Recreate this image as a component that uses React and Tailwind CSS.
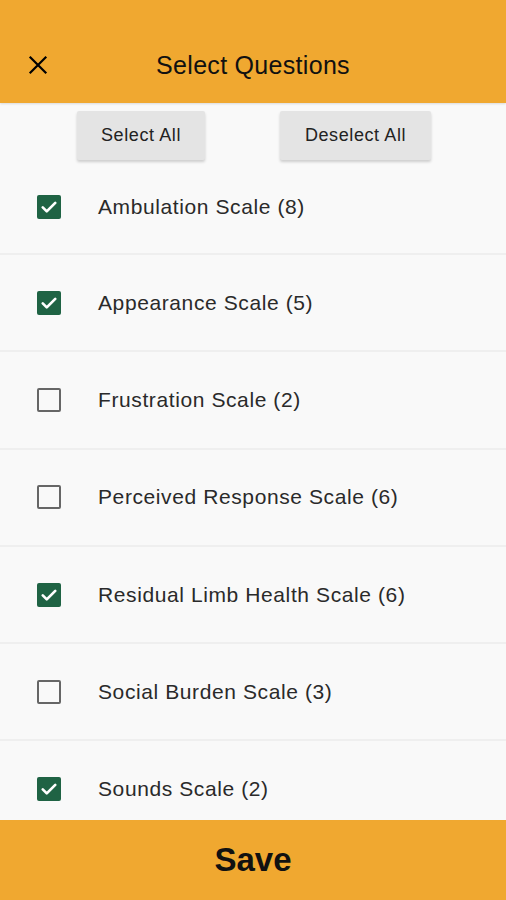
import React, { useState } from 'react';

const initial = [
  { name: 'Ambulation Scale', count: 8, on: true },
  { name: 'Appearance Scale', count: 5, on: true },
  { name: 'Frustration Scale', count: 2, on: false },
  { name: 'Perceived Response Scale', count: 6, on: false },
  { name: 'Residual Limb Health Scale', count: 6, on: true },
  { name: 'Social Burden Scale', count: 3, on: false },
  { name: 'Sounds Scale', count: 2, on: true },
];

const sans = { fontFamily: '"Liberation Sans", Arial, sans-serif' };

function Box({ on }) {
  if (on) {
    return (
      <div className="w-6 h-6 rounded-[2px] bg-[#1f6344] flex items-center justify-center">
        <svg width="20" height="20" viewBox="0 0 24 24" fill="none" stroke="white" strokeWidth="3.2" strokeLinecap="round" strokeLinejoin="round">
          <path d="M4.5 12.5l4.8 4.8L19.5 7" />
        </svg>
      </div>
    );
  }
  return <div className="w-6 h-6 rounded-[2px] border-2 border-[#666]" />;
}

export default function App() {
  const [items, setItems] = useState(initial);

  const toggle = (i) => setItems(items.map((it, j) => (j === i ? { ...it, on: !it.on } : it)));
  const setAll = (v) => setItems(items.map(it => ({ ...it, on: v })));

  return (
    <div className="h-[900px] w-full flex flex-col bg-[#f9f9f9] overflow-hidden" style={sans}>
      <header className="h-[103px] shrink-0 bg-[#f0a830] flex items-end pb-[24px] px-7 relative shadow-[0_1px_2px_rgba(0,0,0,0.12)] z-10">
        <button className="w-5 h-5 flex items-center justify-center text-black mb-[4px]">
          <svg width="20" height="20" viewBox="0 0 20 20" fill="none" stroke="currentColor" strokeWidth="2.2" strokeLinecap="square">
            <path d="M2.5 2.5l15 15M17.5 2.5l-15 15" />
          </svg>
        </button>
        <h1 className="flex-1 text-center text-[25px] text-[#111] leading-[28px] pr-5 tracking-[0.3px]">Select Questions</h1>
      </header>

      <div className="flex justify-between pl-[77px] pr-[75px] pt-2">
        <button onClick={() => setAll(true)} className="w-[128px] h-[49px] bg-[#e4e4e4] rounded-[2px] shadow-[0_2px_3px_rgba(0,0,0,0.18)] text-[18px] text-[#222] tracking-[0.6px]">Select All</button>
        <button onClick={() => setAll(false)} className="w-[151px] h-[49px] bg-[#e4e4e4] rounded-[2px] shadow-[0_2px_3px_rgba(0,0,0,0.18)] text-[18px] text-[#222] tracking-[0.6px]">Deselect All</button>
      </div>

      <ul className="flex-1 overflow-hidden">
        {items.map((it, i) => (
          <li key={it.name} onClick={() => toggle(i)} className={`flex items-center pl-[37px] border-b-2 border-[#efefef] cursor-pointer ${i === 0 ? 'h-[95px]' : 'h-[97.3px]'}`}>
            <Box on={it.on} />
            <span className="ml-[37px] text-[21px] text-[#2a2a2a] tracking-[0.6px]">{it.name} ({it.count})</span>
          </li>
        ))}
      </ul>

      <button className="h-[80px] shrink-0 bg-[#f0a830] text-[33px] font-bold text-[#111]">Save</button>
    </div>
  );
}
